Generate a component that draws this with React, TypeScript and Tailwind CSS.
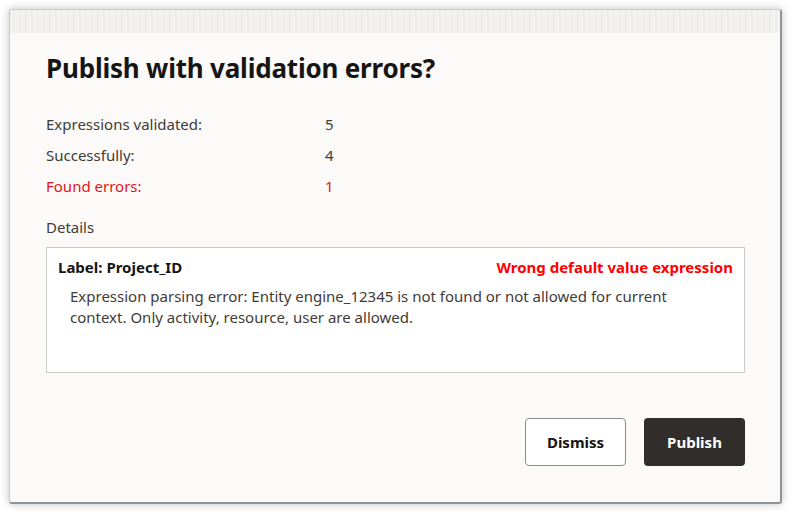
const stats = [
  { label: 'Expressions validated:', value: '5', error: false },
  { label: 'Successfully:', value: '4', error: false },
  { label: 'Found errors:', value: '1', error: true },
];

export default function App() {
  return (
    <div className="w-[792px] h-[513px] bg-white pl-[9px] pr-[10px] pt-[9px] pb-[9px] font-['Noto_Sans',sans-serif]">
      <div className="h-full flex flex-col bg-[#fbfaf8] rounded-[3px] border border-[#c9cccf] border-r-2 border-b-2 border-r-[#8f9498] border-b-[#8f9498] shadow-[0_0_8px_rgba(0,0,0,0.25)] overflow-hidden">
        <div className="h-[23px] shrink-0 bg-[repeating-linear-gradient(90deg,#efedeb_0px,#f6f5f3_2px,#ebe9e6_4px,#f8f7f5_6px)]" />
        <div className="flex-1 flex flex-col pl-[36px] pr-[35px]">
          <h1 className="mt-[19px] text-[26px] leading-[32px] font-bold text-[#161513] tracking-[-0.2px]">
            Publish with validation errors?
          </h1>
          <div className="mt-[25px] flex flex-col">
            {stats.map((s) => (
              <div
                key={s.label}
                className={`flex h-[31px] items-center text-[15px] ${s.error ? 'text-[#e5141a]' : 'text-[#3f3c39]'}`}
              >
                <span className="w-[279px]">{s.label}</span>
                <span>{s.value}</span>
              </div>
            ))}
          </div>
          <div className="mt-[15px] text-[15px] text-[#3f3c39] leading-[20px]">Details</div>
          <div className="mt-[10px] h-[126px] bg-white border border-[#c9c9c9] px-[11px] pt-[9px]">
            <div className="flex justify-between text-[15px] font-bold leading-[20px]">
              <span className="text-[#161513]">Label: Project_ID</span>
              <span className="text-[#ff0000]">Wrong default value expression</span>
            </div>
            <p className="mt-[9px] pl-[12px] pr-[60px] text-[15px] leading-[21px] text-[#3f3c39]">
              Expression parsing error: Entity engine_12345 is not found or not allowed for current
              context. Only activity, resource, user are allowed.
            </p>
          </div>
          <div className="mt-[45px] flex justify-end gap-[18px]">
            <button className="w-[101px] h-[48px] rounded-[4px] border border-[#8d8a87] bg-white text-[15px] font-bold text-[#161513]">
              Dismiss
            </button>
            <button className="w-[101px] h-[48px] rounded-[4px] bg-[#312d2a] text-[15px] font-bold text-white">
              Publish
            </button>
          </div>
        </div>
      </div>
    </div>
  );
}
